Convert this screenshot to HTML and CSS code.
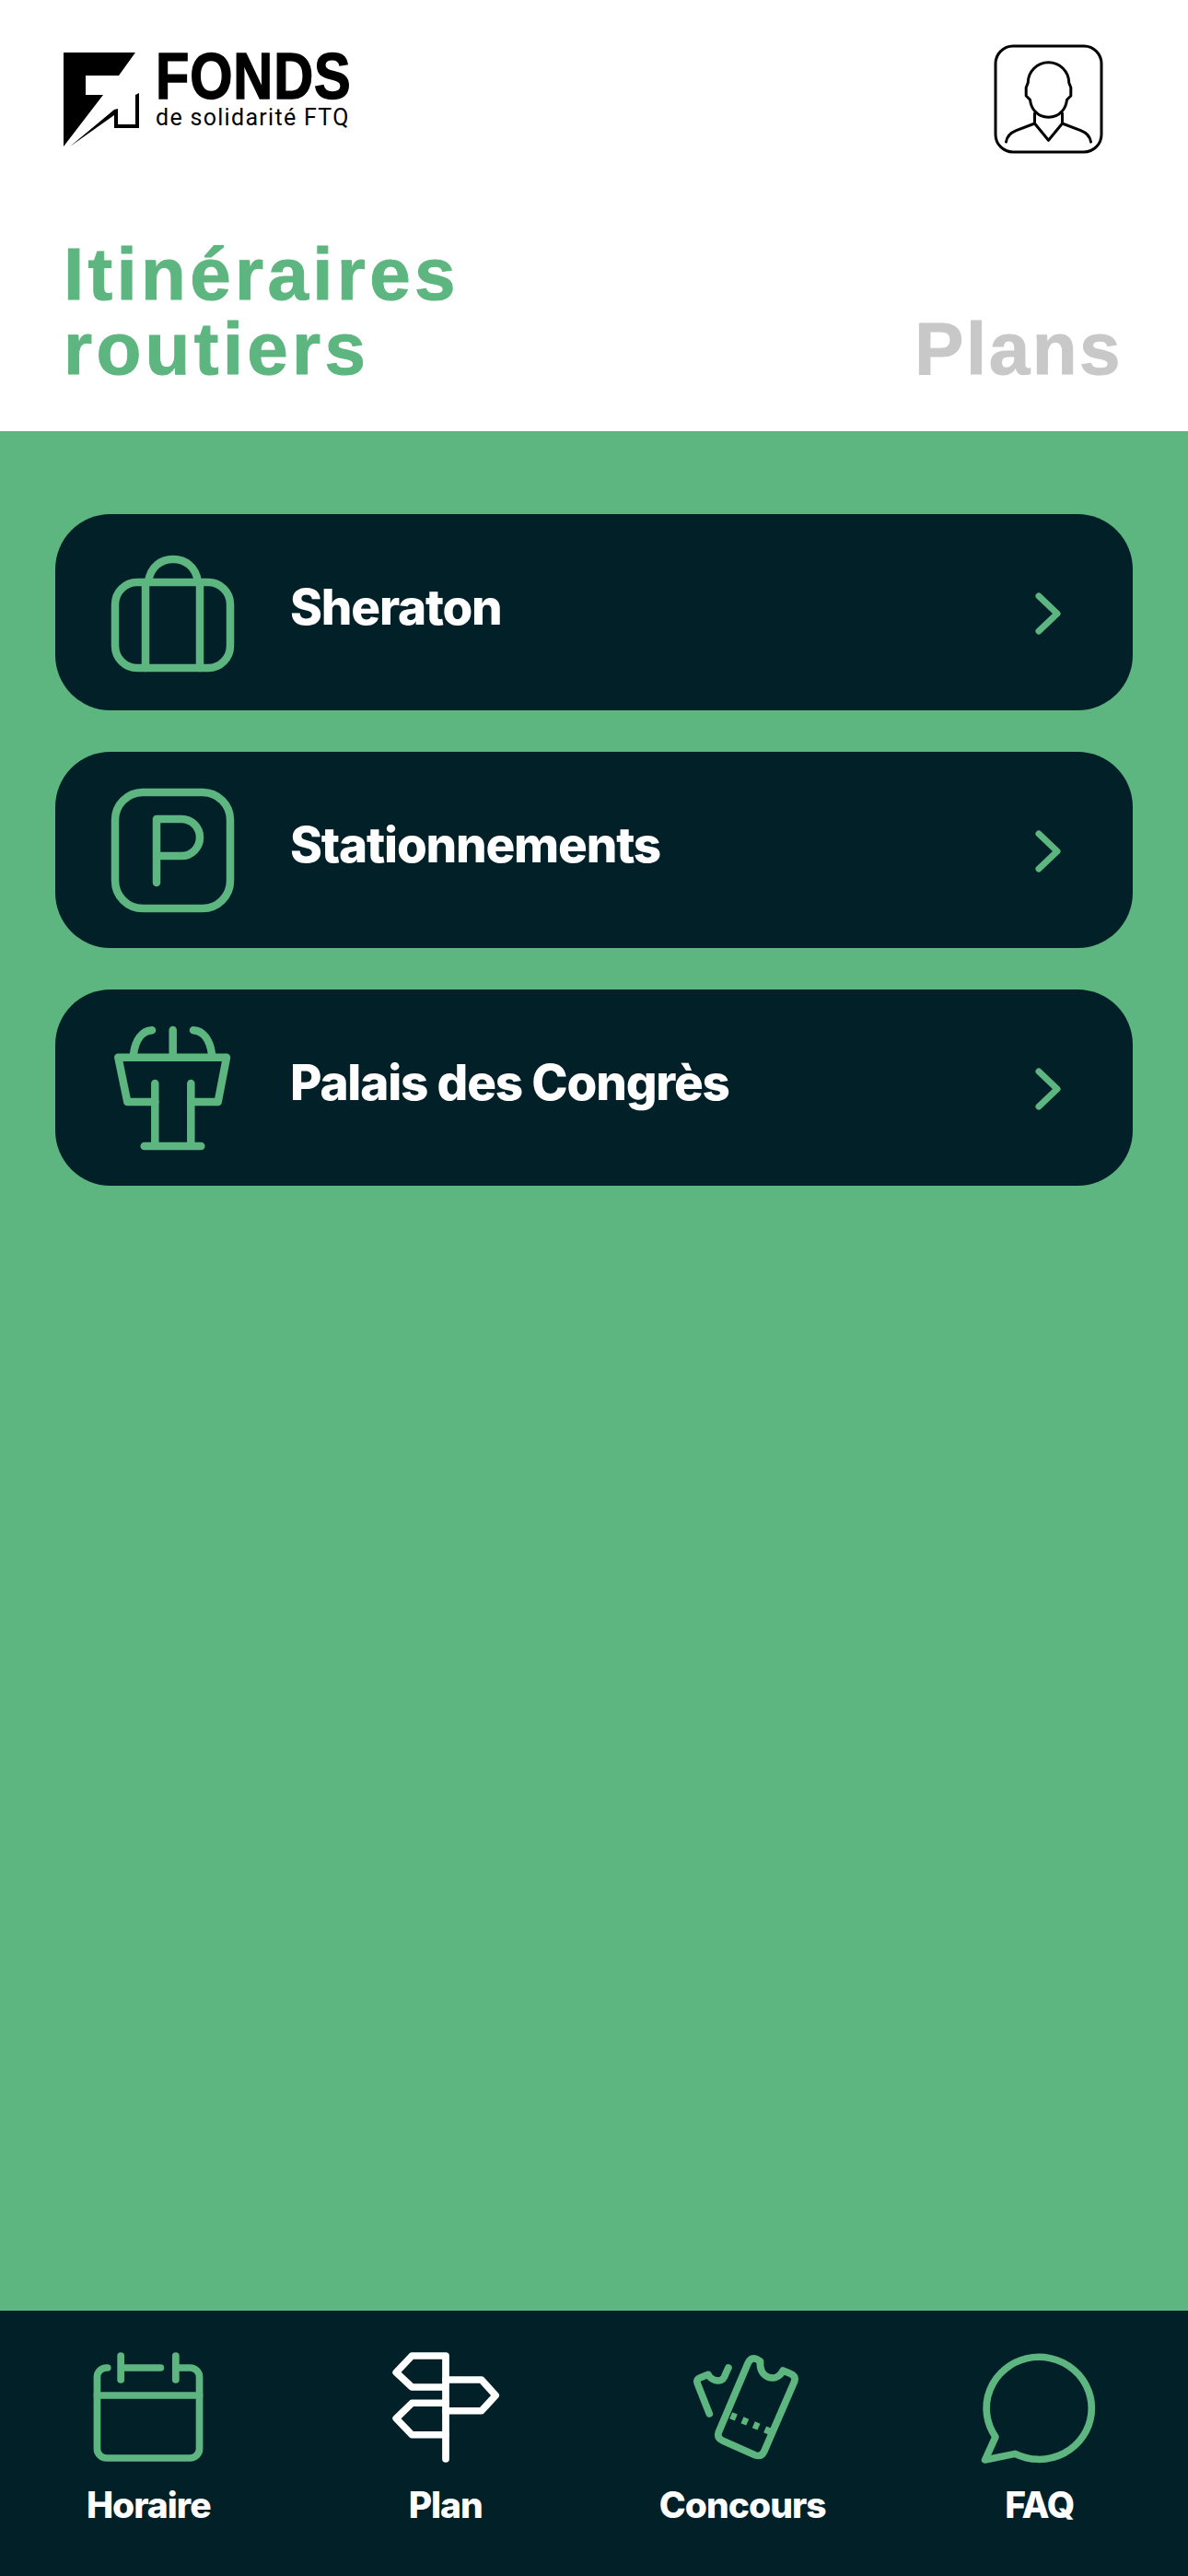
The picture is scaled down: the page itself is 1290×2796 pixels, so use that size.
FILE: index.html
```html
<!DOCTYPE html>
<html lang="fr">

<head>
    <meta charset="UTF-8" />
    <meta name="viewport" content="width=device-width, initial-scale=1.0" />
    <title>Itinéraires routiers</title>
    <link rel="stylesheet" href="styles.css">
</head>

<body>
    <header class="top">
        <div class="top-row">
            <div class="logo">
                <svg class="logo-mark" viewBox="0 0 84 104">
                    <polygon points="0,0 78,0 60,25 24,25 24,46 43,46 0,102" />
                    <polygon points="7,102 55,62 59,61 59,78 78,78 78,46 82,44 82,82 55,82 55,68" />
                </svg>
                <div class="logo-text">
                    <div class="logo-name">FONDS</div>
                    <div class="logo-sub">de solidarité FTQ</div>
                </div>
            </div>
            <button class="profile">
                <svg viewBox="0 0 120 121">
                    <rect x="2.5" y="3" width="115" height="115" rx="19" />
                    <path d="M37.7 43C38 30 48 20.7 60 20.7S82 30 82.3 43L84.3 48V57L80 61.3C79 70 73 80.3 60 80.3S41 70 40 61.3L35.7 57V48Z" />
                    <path d="M45 76V87L60 105.3 75 87V76" />
                    <path d="M45 87L25 94.7C19 97 15 101 14 107" />
                    <path d="M75 87L95 94.7C101 97 105 101 106 107" />
                </svg>
            </button>
        </div>
        <div class="tabs">
            <h1 class="tab tab-active">Itinéraires<br>routiers</h1>
            <div class="tab">Plans</div>
        </div>
    </header>

    <main class="list">
        <a class="card">
            <svg class="card-icon" viewBox="0 0 140 140">
                <rect x="8" y="37" width="125" height="93" rx="24" />
                <path d="M41 37V130M100 37V130" />
                <path d="M44 37C46 20 58 12 71 12S96 20 98 37" />
            </svg>
            <span class="card-title">Sheraton</span>
            <svg class="chevron" viewBox="0 0 30 48"><path d="M5 5L25 24 5 43" /></svg>
        </a>
        <a class="card">
            <svg class="card-icon" viewBox="0 0 140 140">
                <rect x="8" y="7" width="125" height="126" rx="30" />
                <path d="M53 105V36H80a20 20 0 0 1 0 40H53" />
            </svg>
            <span class="card-title">Stationnements</span>
            <svg class="chevron" viewBox="0 0 30 48"><path d="M5 5L25 24 5 43" /></svg>
        </a>
        <a class="card">
            <svg class="card-icon" viewBox="0 0 140 140">
                <path d="M11.3 36.7H129L119.7 85H90.3M51.3 85H21.3L11.3 36.7" />
                <path d="M51.3 65V133M90.3 65V133M39.7 133H101.3" />
                <path d="M70.7 7V36.7M28 33C30 18 37 8 48 7.3M113 33C111 18 104 8 93 7.3" />
            </svg>
            <span class="card-title">Palais des Congrès</span>
            <svg class="chevron" viewBox="0 0 30 48"><path d="M5 5L25 24 5 43" /></svg>
        </a>
    </main>

    <nav class="nav">
        <a class="nav-item">
            <svg viewBox="-3 0 140 130" preserveAspectRatio="none">
                <path d="M24 22H23a10 10 0 0 0-10 10v78a10 10 0 0 0 10 10h88a10 10 0 0 0 10-10V32a10 10 0 0 0-10-10H99" />
                <path d="M38 22H80M13 52H121M38 9V35M96 9V35" />
            </svg>
            <span>Horaire</span>
        </a>
        <a class="nav-item nav-active">
            <svg viewBox="-15 0 140 130" preserveAspectRatio="none">
                <path d="M55 121V9H19.3L2.7 27 19.3 43H55" />
                <path d="M55 35H92.7L107.7 52 92.7 68.7H55" />
                <path d="M55 60.3H19.3L2.7 77 19.3 94.7H55" />
            </svg>
            <span>Plan</span>
        </a>
        <a class="nav-item">
            <svg viewBox="-4 0 140 130" preserveAspectRatio="none">
                <path d="M85 15C84 24 88 30 93 32 100 35 106 31 109 25L117 28.5Q123 31 121 37L89 113Q86 119 80 117L45 101Q39 98 41 92L72 17Q75 10 81 12.5Z" />
                <path class="dashes" d="M54 73.7L95.7 91.3" />
                <path d="M31.3 72L19 40Q17 35 21 33L30 29.3C33 36 44 39 47 32Q49 27 51.3 22" />
            </svg>
            <span>Concours</span>
        </a>
        <a class="nav-item">
            <svg viewBox="-13 0 140 130" preserveAspectRatio="none">
                <path d="M10.3 97L-.7 122 31 115.3A55.5 55.5 0 1 0 10.3 97Z" />
            </svg>
            <span>FAQ</span>
        </a>
    </nav>
</body>

</html>
```

FILE: styles.css
```css
body {
    margin: 0;
    height: 2796px;
    display: flex;
    flex-direction: column;
    background-color: #5db67f;
    font-family: Inter, "Liberation Sans", sans-serif;
}

svg {
    display: block;
    fill: none;
    stroke-linecap: round;
    stroke-linejoin: round;
}

.top {
    height: 468px;
    box-sizing: border-box;
    padding: 47px 71px 0 69px;
    background-color: white;
}

.top-row {
    display: flex;
    justify-content: space-between;
    padding-right: 20px;
}

.logo {
    display: flex;
    gap: 16px;
    margin-top: 10px;
}

.logo-mark {
    width: 84px;
    height: 104px;
    fill: black;
}

.logo-text {
    width: 207px;
    color: black;
}

.logo-name {
    font-family: "Liberation Sans", sans-serif;
    font-size: 70px;
    font-weight: bold;
    line-height: 52px;
    letter-spacing: 1px;
    transform: scaleX(0.85);
    transform-origin: left;
    -webkit-text-stroke: 1.5px black;
}

.logo-sub {
    margin-top: 4px;
    font-family: Roboto, sans-serif;
    font-size: 25px;
    line-height: 30px;
    letter-spacing: 1.3px;
    white-space: nowrap;
}

.profile {
    width: 121px;
    height: 121px;
    padding: 0;
    border: 0;
    background: none;
}

.profile svg {
    width: 121px;
    height: 121px;
    stroke: black;
    stroke-width: 3;
}

.tabs {
    display: flex;
    justify-content: space-between;
    align-items: flex-end;
    margin-top: 89px;
}

.tab {
    margin: 0;
    font-family: "Liberation Sans", sans-serif;
    font-size: 80px;
    font-weight: bold;
    line-height: 81px;
    letter-spacing: 2.5px;
    color: #c8c8c8;
    -webkit-text-stroke: 1px #c8c8c8;
}

.tab-active {
    letter-spacing: 4.3px;
    color: #5db67f;
    -webkit-text-stroke: 1px #5db67f;
}

.list {
    flex: 1;
    display: flex;
    flex-direction: column;
    gap: 45px;
    padding: 90px 60px 0;
}

.card {
    height: 213px;
    display: flex;
    align-items: center;
    padding: 0 77px 0 57px;
    border-radius: 60px;
    background-color: #022028;
}

.card-icon {
    width: 140px;
    height: 140px;
    stroke: #5db67f;
    stroke-width: 8.5;
}

.card-title {
    flex: 1;
    margin-left: 58px;
    margin-bottom: 12px;
    font-size: 53px;
    font-weight: 800;
    letter-spacing: -1.2px;
    color: white;
}

.chevron {
    width: 30px;
    height: 48px;
    stroke: #5db67f;
    stroke-width: 7;
    margin-top: 3px;
}

.nav {
    height: 288px;
    box-sizing: border-box;
    display: grid;
    grid-template-columns: repeat(4, 322.5px);
    padding-top: 40px;
    background-color: #022028;
}

.nav-item {
    display: flex;
    flex-direction: column;
    align-items: center;
    gap: 18px;
    font-size: 39px;
    font-weight: 800;
    line-height: 46px;
    letter-spacing: -1px;
    color: white;
}

.nav-item svg {
    width: 144px;
    height: 130px;
    stroke: #5db67f;
    stroke-width: 7.5;
}

.nav-item.nav-active svg {
    stroke: white;
}

.nav-item .dashes {
    stroke-linecap: butt;
    stroke-dasharray: 6 7;
}
```
